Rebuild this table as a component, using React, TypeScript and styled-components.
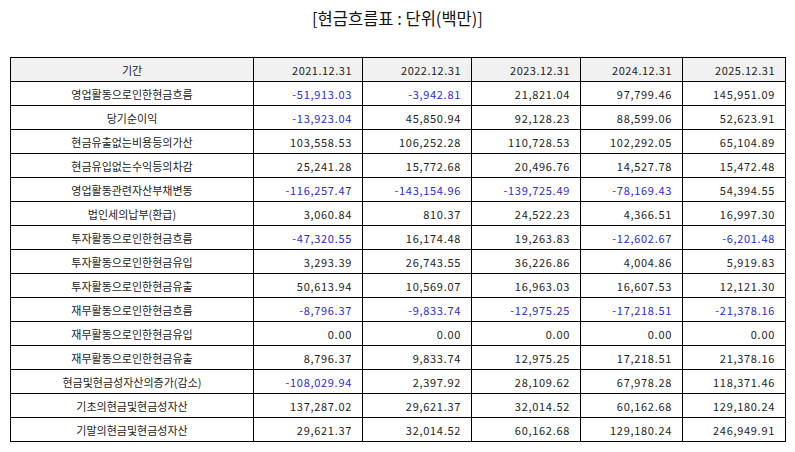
import React from "react";
import styled, { createGlobalStyle } from "styled-components";

const GlobalStyle = createGlobalStyle`
  html, body {
    margin: 0;
    padding: 0;
    background: #fff;
  }
  body {
    font-family: "Noto Sans CJK KR", "Noto Sans", sans-serif;
    color: #111;
  }
`;

const Page = styled.div`
  width: 795px;
  height: 452px;
  padding: 6px 10px 0;
  box-sizing: border-box;
`;

const Title = styled.div`
  text-align: center;
  font-size: 16.5px;
  line-height: 24px;
  color: #111;
  margin-bottom: 27px;
`;

const Table = styled.table`
  width: 775px;
  border-collapse: collapse;
  table-layout: fixed;
  font-size: 11px;
`;

const HeadCell = styled.th<{ $left?: boolean }>`
  background: #f1f1f1;
  border: 1px solid #000;
  height: 23px;
  padding: 0 10px;
  font-weight: 400;
  letter-spacing: ${(p) => (p.$left ? "0" : "0.5px")};
  text-align: ${(p) => (p.$left ? "center" : "right")};
  color: #222;
`;

const LabelCell = styled.td`
  border: 1px solid #000;
  height: 23px;
  padding: 0 8px;
  text-align: center;
  color: #222;
  white-space: nowrap;
`;

const ValueCell = styled.td<{ $neg: boolean }>`
  border: 1px solid #000;
  height: 23px;
  padding: 0 10px;
  text-align: right;
  letter-spacing: 0.7px;
  color: ${(p) => (p.$neg ? "#2a2ad0" : "#222")};
`;

const years = ["2021.12.31", "2022.12.31", "2023.12.31", "2024.12.31", "2025.12.31"];
const widths = [243, 109, 109, 109, 102, 103];

const rows: [string, string[]][] = [
  ["영업활동으로인한현금흐름", ["-51,913.03", "-3,942.81", "21,821.04", "97,799.46", "145,951.09"]],
  ["당기순이익", ["-13,923.04", "45,850.94", "92,128.23", "88,599.06", "52,623.91"]],
  ["현금유출없는비용등의가산", ["103,558.53", "106,252.28", "110,728.53", "102,292.05", "65,104.89"]],
  ["현금유입없는수익등의차감", ["25,241.28", "15,772.68", "20,496.76", "14,527.78", "15,472.48"]],
  ["영업활동관련자산부채변동", ["-116,257.47", "-143,154.96", "-139,725.49", "-78,169.43", "54,394.55"]],
  ["법인세의납부(환급)", ["3,060.84", "810.37", "24,522.23", "4,366.51", "16,997.30"]],
  ["투자활동으로인한현금흐름", ["-47,320.55", "16,174.48", "19,263.83", "-12,602.67", "-6,201.48"]],
  ["투자활동으로인한현금유입", ["3,293.39", "26,743.55", "36,226.86", "4,004.86", "5,919.83"]],
  ["투자활동으로인한현금유출", ["50,613.94", "10,569.07", "16,963.03", "16,607.53", "12,121.30"]],
  ["재무활동으로인한현금흐름", ["-8,796.37", "-9,833.74", "-12,975.25", "-17,218.51", "-21,378.16"]],
  ["재무활동으로인한현금유입", ["0.00", "0.00", "0.00", "0.00", "0.00"]],
  ["재무활동으로인한현금유출", ["8,796.37", "9,833.74", "12,975.25", "17,218.51", "21,378.16"]],
  ["현금및현금성자산의증가(감소)", ["-108,029.94", "2,397.92", "28,109.62", "67,978.28", "118,371.46"]],
  ["기초의현금및현금성자산", ["137,287.02", "29,621.37", "32,014.52", "60,162.68", "129,180.24"]],
  ["기말의현금및현금성자산", ["29,621.37", "32,014.52", "60,162.68", "129,180.24", "246,949.91"]],
];

export default function App() {
  return (
    <>
      <GlobalStyle />
      <Page>
        <Title>[현금흐름표 : 단위(백만)]</Title>
        <Table>
          <colgroup>
            {widths.map((w, i) => (
              <col key={i} style={{ width: w }} />
            ))}
          </colgroup>
          <thead>
            <tr>
              <HeadCell $left>기간</HeadCell>
              {years.map((y) => (
                <HeadCell key={y}>{y}</HeadCell>
              ))}
            </tr>
          </thead>
          <tbody>
            {rows.map(([label, vals]) => (
              <tr key={label}>
                <LabelCell>{label}</LabelCell>
                {vals.map((v, i) => (
                  <ValueCell key={i} $neg={v.startsWith("-")}>
                    {v}
                  </ValueCell>
                ))}
              </tr>
            ))}
          </tbody>
        </Table>
      </Page>
    </>
  );
}
